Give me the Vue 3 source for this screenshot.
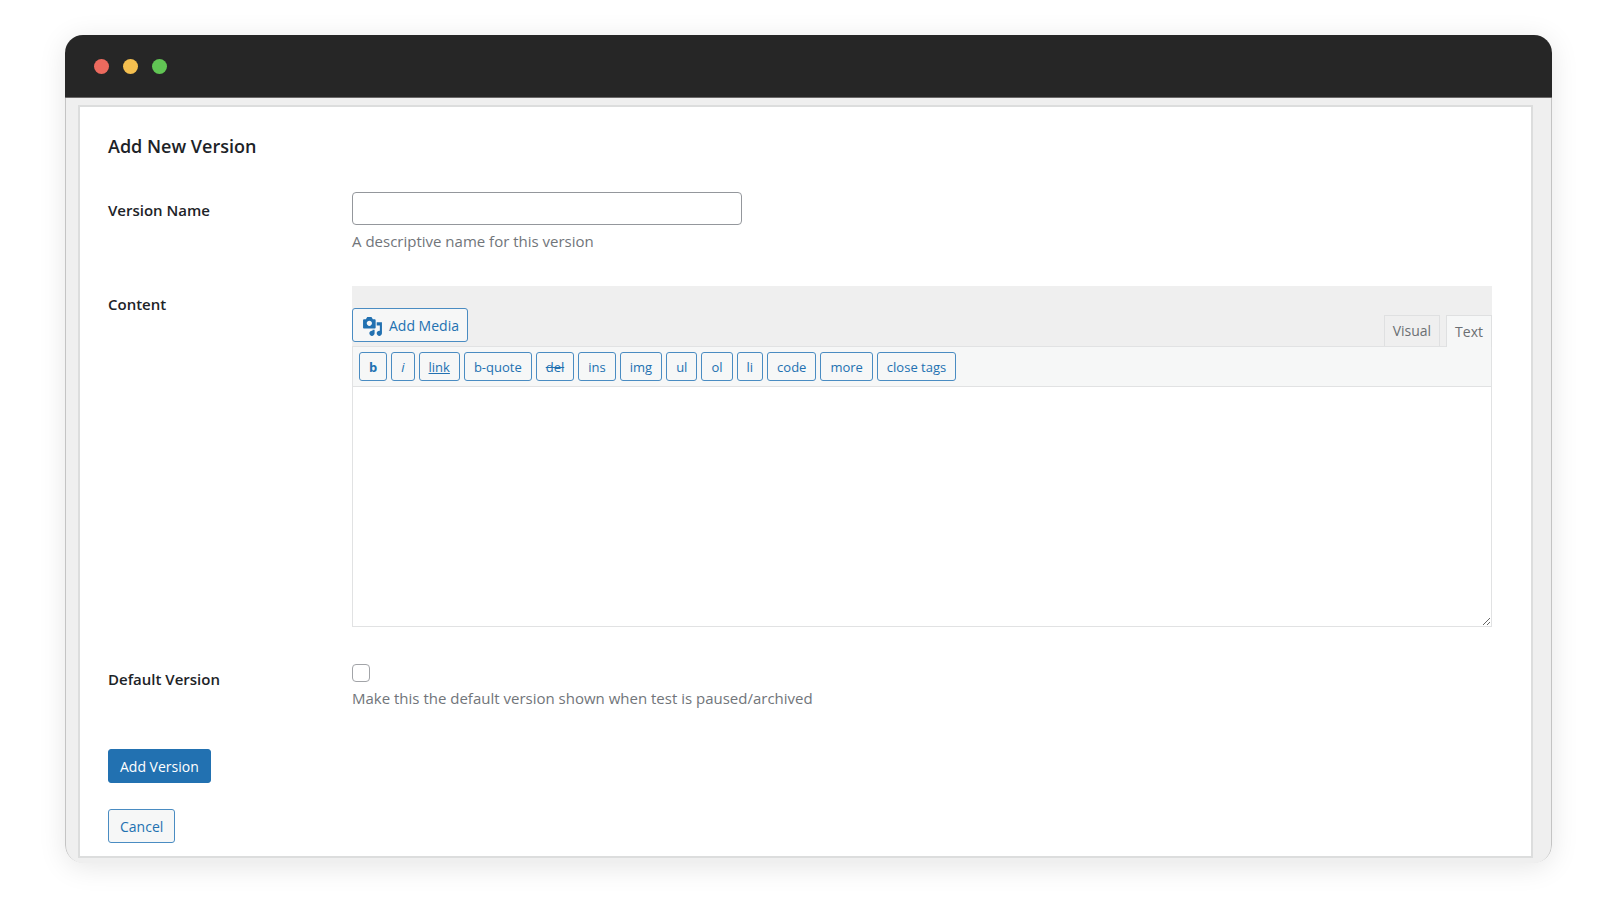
<script setup>
import { ref } from 'vue'

const name = ref('')
const content = ref('')
const isDefault = ref(false)
const tags = [
  { label: 'b', style: 'bold' },
  { label: 'i', style: 'italic' },
  { label: 'link', style: 'underline' },
  { label: 'b-quote' },
  { label: 'del', style: 'strike' },
  { label: 'ins' },
  { label: 'img' },
  { label: 'ul' },
  { label: 'ol' },
  { label: 'li' },
  { label: 'code' },
  { label: 'more' },
  { label: 'close tags' },
]
</script>

<template>
  <div class="window">
    <header class="titlebar">
      <span class="dot red"></span>
      <span class="dot yellow"></span>
      <span class="dot green"></span>
    </header>
    <main class="body">
      <form class="panel" @submit.prevent>
        <h1>Add New Version</h1>

        <div class="row name-row">
          <label class="label" for="version-name">Version Name</label>
          <div class="field">
            <input id="version-name" v-model="name" class="text-input" type="text" aria-describedby="name-help" />
            <p id="name-help" class="help">A descriptive name for this version</p>
          </div>
        </div>

        <div class="row content-row">
          <label class="label" for="version-content">Content</label>
          <div class="editor">
            <div class="editor-top">
              <button class="button media" type="button">
                <svg viewBox="0 0 20 20" width="21" height="21" aria-hidden="true">
                  <path fill="currentColor" d="M13 11V4c0-.55-.45-1-1-1h-1.67L9 1H5L3.67 3H2c-.55 0-1 .45-1 1v7c0 .55.45 1 1 1h10c.55 0 1-.45 1-1zM7 4.5c1.38 0 2.5 1.12 2.5 2.5S8.38 9.5 7 9.5 4.5 8.38 4.5 7 5.62 4.5 7 4.5zM14 6h5v10.5c0 1.38-1.12 2.5-2.5 2.5S14 17.88 14 16.5s1.12-2.5 2.5-2.5c.17 0 .34.02.5.05V9h-3V6zm-4 8.05V13h2v3.5c0 1.38-1.12 2.5-2.5 2.5S7 17.88 7 16.5 8.12 14 9.5 14c.17 0 .34.02.5.05z" />
                </svg>
                Add Media
              </button>
              <div class="tabs">
                <button class="tab" type="button">Visual</button>
                <button class="tab active" type="button">Text</button>
              </div>
            </div>
            <div class="toolbar">
              <button v-for="tag in tags" :key="tag.label" class="tag" :class="tag.style" type="button">{{ tag.label }}</button>
            </div>
            <textarea id="version-content" v-model="content" class="area"></textarea>
          </div>
        </div>

        <div class="row default-row">
          <label class="label" for="version-default">Default Version</label>
          <div class="field">
            <input id="version-default" v-model="isDefault" class="check" type="checkbox" aria-describedby="default-help" />
            <p id="default-help" class="help">Make this the default version shown when test is paused/archived</p>
          </div>
        </div>

        <div class="actions">
          <button class="button primary" type="submit">Add Version</button>
          <button class="button" type="button">Cancel</button>
        </div>
      </form>
    </main>
  </div>
</template>

<style>
body {
  background: #fff;
}
</style>

<style scoped>
* {
  box-sizing: border-box;
}
.window {
  margin: 35px 64px 40px 65px;
  border-radius: 18px;
  overflow: hidden;
  box-shadow: 0 4px 28px rgba(0, 0, 0, 0.1);
  font-family: "Open Sans", "Noto Sans", sans-serif;
  font-size: 15px;
  line-height: 20px;
  color: #1d2327;
}
.titlebar {
  display: flex;
  align-items: center;
  gap: 14px;
  height: 63px;
  padding: 0 29px;
  background: #262626;
  border-bottom: 1px solid #6a6868;
}
.dot {
  width: 15px;
  height: 15px;
  border-radius: 50%;
}
.red { background: #ec6a5e; }
.yellow { background: #f4bf4f; }
.green { background: #61c554; }
.body {
  padding: 7px 18px 5px 12px;
  background: #efefef;
  border: 1px solid #c4c4c4;
  border-width: 0 1px;
  border-radius: 0 0 18px 18px;
}
.panel {
  padding: 28px 39px 13px 28px;
  background: #fff;
  border: 2px solid #dcdddd;
}
h1 {
  margin: 0;
  font-size: 18px;
  line-height: 22px;
  font-weight: 600;
}
.row {
  display: grid;
  grid-template-columns: 244px minmax(0, 1fr);
}
.label {
  font-weight: 600;
  padding-top: 8px;
  justify-self: start;
  align-self: start;
}
.name-row { margin-top: 35px; }
.content-row { margin-top: 35px; }
.default-row { margin-top: 37px; }
.default-row .label { padding-top: 5px; }
.text-input {
  display: block;
  width: 390px;
  max-width: 100%;
  height: 33px;
  padding: 0 8px;
  border: 1px solid #94979c;
  border-radius: 4px;
  font: inherit;
  background: #fff;
}
.help {
  margin: 6px 0 0;
  color: #71757a;
}
.editor-top {
  display: flex;
  justify-content: space-between;
  align-items: flex-end;
  height: 60px;
  background: #efefef;
}
.button {
  height: 34px;
  padding: 2px 11px 0;
  border: 1px solid #4a8cc2;
  border-radius: 3px;
  background: #f6f7f7;
  color: #2271b1;
  font: inherit;
  font-size: 14px;
}
.media {
  display: flex;
  align-items: center;
  gap: 6px;
  padding: 2px 8px 0 9px;
  margin-bottom: 4px;
}
.primary {
  background: #2271b1;
  border-color: #2271b1;
  color: #fff;
}
.tabs {
  display: flex;
  align-items: flex-start;
  gap: 6px;
  margin-bottom: -1px;
  z-index: 1;
}
.tab {
  height: 31px;
  padding: 0 8px;
  border: 1px solid #dfe0e1;
  border-bottom: 0;
  background: #efefef;
  color: #6b6f73;
  font: inherit;
  font-size: 14px;
}
.tab.active {
  height: 32px;
  background: #f6f7f7;
}
.toolbar {
  display: flex;
  flex-wrap: wrap;
  gap: 4px;
  padding: 5px 6px;
  border: 1px solid #e1e2e3;
  background: #f6f7f7;
}
.tabs {
  position: relative;
}
.tag {
  height: 29px;
  padding: 0 9px;
  border: 1px solid #4a8cc2;
  border-radius: 3px;
  background: #f6f7f7;
  color: #2271b1;
  font: inherit;
  font-size: 13px;
}
.bold { font-weight: 700; }
.italic { font-style: italic; }
.underline { text-decoration: underline; }
.strike { text-decoration: line-through; }
.area {
  display: block;
  width: 100%;
  height: 240px;
  padding: 10px;
  border: 1px solid #e1e2e3;
  border-top: 0;
  background: #fff;
  font: inherit;
  resize: vertical;
  outline: 0;
}
.check {
  appearance: none;
  display: block;
  width: 18px;
  height: 18px;
  margin: 0;
  border: 1px solid #a2a4a8;
  border-radius: 4px;
  background: #fff;
}
.actions {
  display: flex;
  flex-direction: column;
  align-items: flex-start;
  gap: 26px;
  margin-top: 41px;
}
</style>
